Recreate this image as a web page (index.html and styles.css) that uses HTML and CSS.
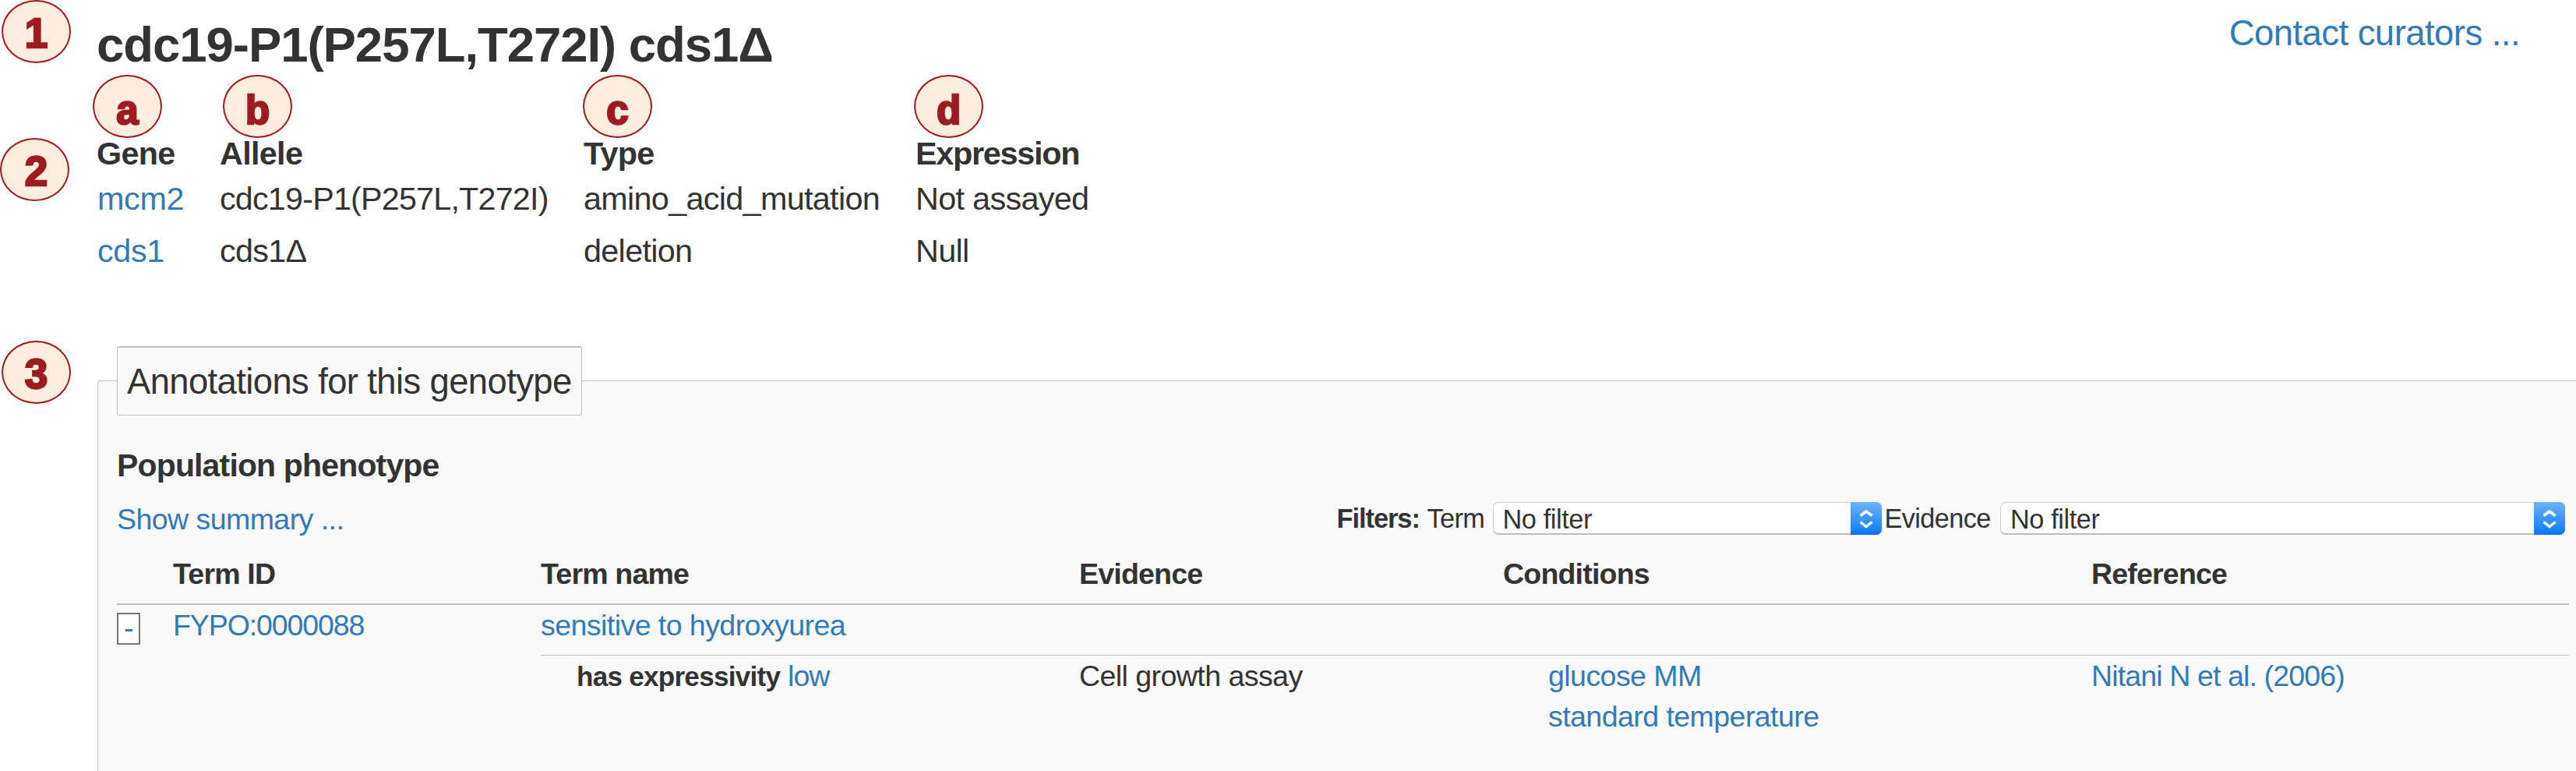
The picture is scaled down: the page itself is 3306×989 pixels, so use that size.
FILE: index.html
```html
<!DOCTYPE html>
<html lang="en">
<head>
<meta charset="utf-8">
<title>cdc19-P1(P257L,T272I) cds1Δ</title>
<link rel="stylesheet" href="styles.css">
</head>
<body>
<header class="page-header">
  <h1 class="title">cdc19-P1(P257L,T272I) cds1Δ</h1>
  <a class="contact">Contact curators ...</a>
</header>

<div class="genotype">
  <div class="g-row g-head"><span>Gene</span><span>Allele</span><span>Type</span><span class="g-expr">Expression</span></div>
  <div class="g-row"><a class="g-gene">mcm2</a><span class="g-allele">cdc19-P1(P257L,T272I)</span><span>amino_acid_mutation</span><span>Not assayed</span></div>
  <div class="g-row"><a class="g-gene">cds1</a><span>cds1Δ</span><span>deletion</span><span>Null</span></div>
</div>

<section class="panel">
  <div class="legend">Annotations for this genotype</div>
  <h2 class="subhead">Population phenotype</h2>
  <div class="toolbar">
    <a class="summary">Show summary ...</a>
    <div class="filters">
      <b class="f-label">Filters:</b><span class="f-term">Term</span>
      <div class="select select-term"><span class="value">No filter</span><span class="stepper"><svg viewBox="0 0 40 42"><path d="M12.500 17.500 20 12l7.500 5.500M12.500 25.500l7.500 6 7.500-6"/></svg></span></div>
      <span class="f-evidence">Evidence</span>
      <div class="select select-evidence"><span class="value">No filter</span><span class="stepper"><svg viewBox="0 0 40 42"><path d="M12.500 17.500 20 12l7.500 5.500M12.500 25.500l7.500 6 7.500-6"/></svg></span></div>
    </div>
  </div>
  <div class="grid t-head"><span></span><span>Term ID</span><span>Term name</span><span>Evidence</span><span>Conditions</span><span>Reference</span></div>
  <div class="grid t-term"><a class="toggle">-</a><a class="t-id">FYPO:0000088</a><a class="t-name">sensitive to hydroxyurea</a></div>
  <div class="grid t-detail"><span></span><span></span><span class="ext"><b>has expressivity</b> <a>low</a></span><span>Cell growth assay</span><span class="conds"><a>glucose MM</a><a>standard temperature</a></span><a class="ref">Nitani N et al. (2006)</a></div>
</section>

<span class="mark num m1">1</span>
<span class="mark ma">a</span>
<span class="mark mb">b</span>
<span class="mark mc">c</span>
<span class="mark md">d</span>
<span class="mark num m2">2</span>
<span class="mark num m3">3</span>
</body>
</html>
```

FILE: styles.css
```css
* { box-sizing: border-box; }
body {
  position: relative;
  margin: 0;
  height: 989px;
  overflow: hidden;
  background: #fff;
  color: #333;
  font-family: "Liberation Sans", Arial, sans-serif;
  font-size: 37.5px;
  letter-spacing: -0.55px;
  white-space: nowrap;
}
a { color: #337ab7; }

.page-header {
  display: flex;
  justify-content: space-between;
  align-items: flex-start;
  height: 172px;
  padding: 7px 72px 0 124px;
}
.title { margin: 0; font-size: 63.5px; line-height: 100px; letter-spacing: -1.05px; }
.contact { padding-top: 6px; font-size: 45.5px; line-height: 60px; letter-spacing: -0.55px; }

.genotype { padding-left: 124px; font-size: 41.3px; letter-spacing: -0.66px; }
.g-row {
  display: grid;
  grid-template-columns: 158px 467px 426px 300px;
  line-height: 67px;
}
.g-head { font-weight: bold; line-height: 50px; }
.g-gene { padding-left: 1px; letter-spacing: -0.3px; }
.g-allele { letter-spacing: -0.8px; }
.g-expr { letter-spacing: -1.25px; }

.panel {
  height: 501px;
  margin: 132px 0 0 125px;
  padding: 0 9px 0 24px;
  border: solid #c0c0c0;
  border-width: 1px 0 0 1px;
  border-top-left-radius: 4px;
  background: #f9f9f9;
}
.legend {
  width: 597px;
  height: 89px;
  margin-top: -45px;
  padding: 1px 0 0 12px;
  border: 1px solid #c0c0c0;
  border-top-width: 2px;
  border-radius: 3px;
  background: #f9f9f9;
  font-size: 45.4px;
  letter-spacing: -0.6px;
  line-height: 86px;
}
.subhead { margin: 34px 0 0; font-size: 41px; line-height: 60px; letter-spacing: -0.85px; }

.toolbar {
  display: flex;
  justify-content: space-between;
  align-items: center;
  height: 75px;
  padding-right: 5px;
}
.summary { padding-top: 4px; }
.filters {
  display: flex;
  align-items: center;
  font-size: 34.3px;
  line-height: 42px;
  letter-spacing: -0.6px;
}
.f-label { width: 116px; letter-spacing: -1px; }
.f-term { width: 84px; }
.f-evidence { width: 148.5px; }
.select {
  display: flex;
  justify-content: space-between;
  height: 42px;
  border: 1px solid #cfcfcf;
  border-bottom: 2px solid #bdbdbd;
  border-radius: 7px;
  background: #fff;
}
.select-term { width: 499px; margin-right: 4px; }
.select-evidence { width: 725px; }
.value { padding-left: 12px; letter-spacing: -0.4px; }
.stepper {
  width: 40px;
  height: 42px;
  margin: -1px -1px 0 0;
  border-radius: 0 7px 7px 0;
  background: linear-gradient(#6cb3fa, #1a82fd 85%, #0a6cf5);
}
.stepper svg { display: block; width: 40px; height: 42px; fill: none; stroke: #fff; stroke-width: 3.5; }

.grid { display: grid; grid-template-columns: 72px 472px 691px 544px 755px 1fr; }
.t-head {
  padding-bottom: 4px;
  border-bottom: 2px solid #c0c0c0;
  font-weight: bold;
  letter-spacing: -0.8px;
  line-height: 68px;
}
.t-term { height: 65px; line-height: 53px; }
.t-id { letter-spacing: -1.1px; }
.t-name { grid-column: 3 / -1; border-bottom: 1px solid #c0c0c0; }
.toggle {
  width: 30px;
  height: 41px;
  margin-top: 10px;
  border: 2px solid #777;
  background: #fff;
  line-height: 35px;
  text-align: center;
}
.t-detail { line-height: 52px; }
.ext { padding-left: 46px; }
.ext b { font-size: 35px; letter-spacing: -0.7px; }
.ext a { letter-spacing: -1px; }
.conds { display: flex; flex-direction: column; padding-left: 58px; }
.ref { letter-spacing: -0.87px; }

.mark {
  position: absolute;
  width: 89px;
  height: 81px;
  border: 2px solid #9e1b20;
  border-radius: 50%;
  background: #ffeedd;
  color: #9e1b20;
  font-size: 51px;
  font-weight: bold;
  letter-spacing: 0;
  line-height: 88px;
  text-align: center;
  -webkit-text-stroke: 2.5px #9e1b20;
}
.num { font-size: 53px; line-height: 81px; }
.m1 { left: 2px; top: 0; }
.ma { left: 119px; top: 96px; }
.mb { left: 286px; top: 96px; }
.mc { left: 748px; top: 96px; }
.md { left: 1173px; top: 96px; }
.m2 { left: 0; top: 177px; padding-left: 4px; }
.m3 { left: 2px; top: 437px; }
```
